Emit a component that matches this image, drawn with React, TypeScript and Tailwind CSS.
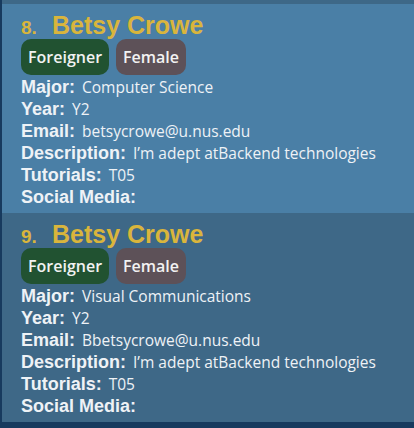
import React from "react";

type Person = { idx: number; major: string; email: string };

const people: Person[] = [
  { idx: 8, major: "Computer Science", email: "betsycrowe@u.nus.edu" },
  { idx: 9, major: "Visual Communications", email: "Bbetsycrowe@u.nus.edu" },
];

const labelFont = { fontFamily: '"Liberation Sans", Arial, sans-serif' };
const valueFont = { fontFamily: '"Open Sans", "Noto Sans", sans-serif' };

function Row({ label, value }: { label: string; value?: string }) {
  return (
    <div className="flex items-baseline h-[22px]">
      <span className="text-[18px] font-bold text-[#eef2f6] leading-[22px]" style={labelFont}>
        {label}
      </span>
      {value !== undefined && (
        <span className="ml-[7px] text-[15.5px] text-[#eef2f6] leading-[22px]" style={valueFont}>
          {value}
        </span>
      )}
    </div>
  );
}

function Card({ p, selected }: { p: Person; selected: boolean }) {
  return (
    <div className={`${selected ? "bg-[#4a7fa6]" : "bg-[#3e6887]"} h-[209px] pl-[19px] pt-[3px]`}>
      <div className="flex items-baseline h-[30px]" style={labelFont}>
        <span className="text-[19px] font-bold text-[#d9b53c] w-[31px]">{p.idx}.</span>
        <span className="text-[25px] font-bold text-[#d9b53c]">Betsy Crowe</span>
      </div>
      <div className="flex gap-[7px] mt-[2px] mb-[1px]" style={valueFont}>
        <span className="h-[36px] px-[7px] rounded-[10px] bg-[#215231] text-[#f2f2f2] text-[16px] font-semibold flex items-center">
          Foreigner
        </span>
        <span className="h-[36px] px-[7px] rounded-[10px] bg-[#5d5158] text-[#f2f2f2] text-[16px] font-semibold flex items-center">
          Female
        </span>
      </div>
      <Row label="Major:" value={p.major} />
      <Row label="Year:" value="Y2" />
      <Row label="Email:" value={p.email} />
      <Row label="Description:" value="I’m adept atBackend technologies" />
      <Row label="Tutorials:" value="T05" />
      <Row label="Social Media:" />
    </div>
  );
}

export default function App() {
  return (
    <div className="w-[414px] h-[428px] bg-[#173a5e] pl-[2px] overflow-hidden">
      <div className="h-[4px] bg-[#3e6887]" />
      <Card p={people[0]} selected />
      <Card p={people[1]} selected={false} />
    </div>
  );
}
